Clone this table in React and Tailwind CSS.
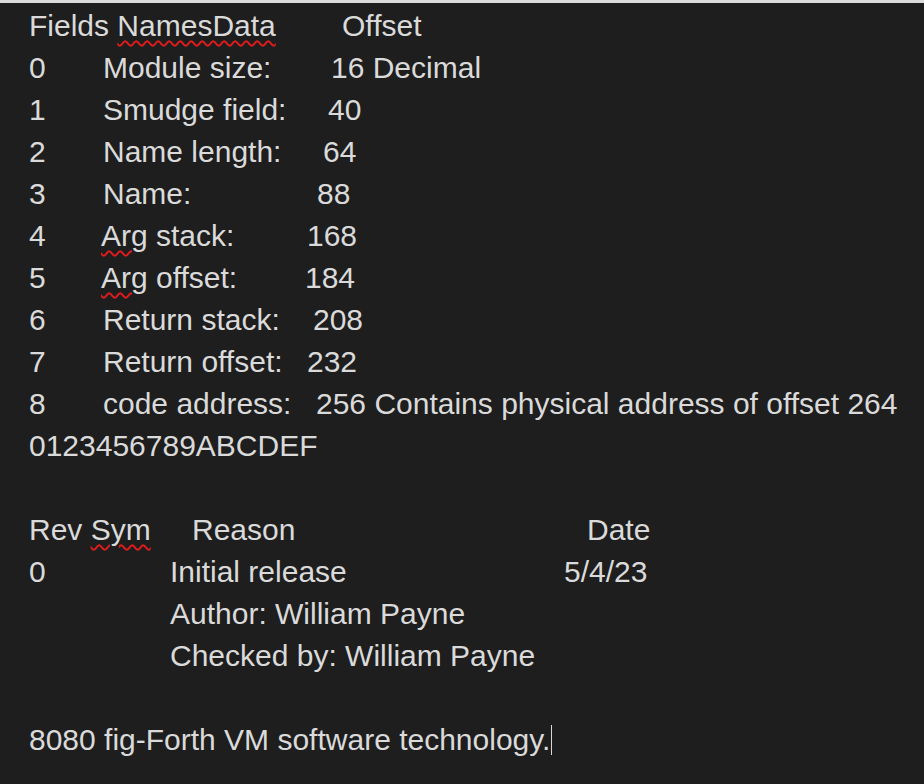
const fieldRows = [
  { n: '0', label: 'Module size:', w: 'w-[228px]', value: '16 Decimal' },
  { n: '1', label: 'Smudge field:', w: 'w-[225px]', value: '40' },
  { n: '2', label: 'Name length:', w: 'w-[220px]', value: '64' },
  { n: '3', label: 'Name:', w: 'w-[214px]', value: '88' },
  { n: '4', label: 'stack:', w: 'w-[206px]', value: '168', arg: true },
  { n: '5', label: 'offset:', w: 'w-[204px]', value: '184', arg: true },
  { n: '6', label: 'Return stack:', w: 'w-[210px]', value: '208' },
  { n: '7', label: 'Return offset:', w: 'w-[204px]', value: '232' },
  { n: '8', label: 'code address:', w: 'w-[213px]', value: '256 Contains physical address of offset 264' },
]

function Misspelt({ children }) {
  return (
    <span className="underline decoration-wavy decoration-[#e51b1b] decoration-2 underline-offset-[4px]">
      {children}
    </span>
  )
}

export default function App() {
  return (
    <div className="min-h-screen bg-[#1e1e1e] border-t-[3px] border-[#dcdcdc] pt-[2px] pl-[29px] text-[#dadada] text-[30px] leading-[42px] whitespace-nowrap font-['Liberation_Sans',Arial,sans-serif]">
      {/* Field table */}
      <div className="flex">
        <span className="w-[313px]">
          Fields <Misspelt>NamesData</Misspelt>
        </span>
        <span>Offset</span>
      </div>
      {fieldRows.map(r => (
        <div key={r.n} className="flex">
          <span className={r.arg ? 'w-[72px]' : 'w-[74px]'}>{r.n}</span>
          <span className={r.w}>
            {r.arg ? <><Misspelt>Arg</Misspelt> {r.label}</> : r.label}
          </span>
          <span>{r.value}</span>
        </div>
      ))}
      <div>0123456789ABCDEF</div>
      <div className="h-[42px]"></div>

      {/* Revision table */}
      <div className="flex">
        <span className="w-[163px]">
          Rev <Misspelt>Sym</Misspelt>
        </span>
        <span className="w-[395px]">Reason</span>
        <span>Date</span>
      </div>
      <div className="flex">
        <span className="w-[141px]">0</span>
        <span className="w-[394px]">Initial release</span>
        <span>5/4/23</span>
      </div>
      <div className="pl-[141px]">Author: William Payne</div>
      <div className="pl-[141px]">Checked by: William Payne</div>
      <div className="h-[42px]"></div>

      <div className="flex items-center">
        <span>8080 fig-Forth VM software technology.</span>
        <span className="ml-[1px] w-px h-[30px] bg-[#d8d8d8]"></span>
      </div>
    </div>
  )
}
